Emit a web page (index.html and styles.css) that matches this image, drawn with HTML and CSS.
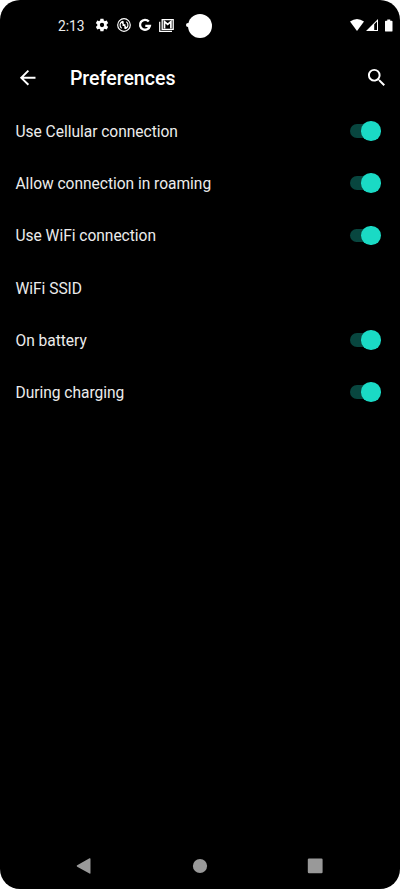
FILE: index.html
```html
<!DOCTYPE html>
<html lang="en">
<head>
<meta charset="utf-8">
<title>Preferences</title>
<link rel="stylesheet" href="styles.css">
</head>
<body>
<div class="screen">
  <div class="status">
    <span class="clock">2:13</span>
    <div class="notifications">
      <svg class="glyph" viewBox="1 1 22 22"><path fill-rule="evenodd" d="M19.4 13c.1-.3.1-.7.1-1s0-.7-.1-1l2.1-1.600c.2-.2.3-.5.1-.7l-2-3.500c-.1-.2-.4-.3-.6-.2l-2.500 1c-.5-.4-1.100-.7-1.700-1L14.400 2.400c0-.2-.2-.4-.5-.4h-4c-.3 0-.5.2-.5.4L9.100 5c-.6.300-1.200.600-1.700 1L5 5c-.2-.1-.5 0-.6.200l-2 3.500c-.1.200-.1.500.1.700L4.600 11c-.1.300-.1.700-.1 1s0 .7.100 1l-2.100 1.600c-.2.200-.3.500-.1.700l2 3.500c.1.200.4.300.6.200l2.400-1c.5.400 1.100.7 1.700 1l.3 2.600c0 .2.2.4.500.4h4c.3 0 .5-.2.500-.4l.4-2.600c.6-.3 1.200-.6 1.700-1l2.500 1c.2.100.5 0 .6-.2l2-3.500c.1-.2.100-.5-.1-.7zM12 15.400a3.400 3.400 0 1 1 0-6.800 3.400 3.400 0 0 1 0 6.800z"/></svg>
      <svg class="glyph" viewBox="0 0 24 24"><g class="sync"><circle cx="12" cy="12" r="10.800"/><path d="M10.500 5.500C4 7 4 15 8 17.500M10.500 5.500v8M13.500 18.500c6.500-1.500 6.500-9.500 2.500-12M13.500 18.500v-8M8 7l8 10"/></g></svg>
      <svg class="glyph" viewBox="0 0 24 24"><path class="google" d="M18.500 6.200A8.500 8.500 0 1 0 20.300 13.500H12.500"/></svg>
      <svg class="mail" viewBox="0 0 15 13"><path class="mail-back" d="M.7 2.800v9.500H13"/><path class="mail-frame" d="M3.200.7h11v9.600h-11z"/><path class="mail-m" d="M5.500 9.500V2.500L8.700 5.300l3.200-2.800v7"/></svg>
    </div>
    <div class="camera"></div>
    <div class="system">
      <svg class="wifi" viewBox="0 0 14 12"><path d="M0 2.600Q7-2.400 14 2.600L7 12z"/></svg>
      <svg class="signal" viewBox="0 0 12 12"><path fill-rule="evenodd" d="M0 12L12 0v12zM8.200 5.300V11H11V2.600z"/></svg>
      <svg class="battery" viewBox="0 0 8 13"><path d="M2.400 0h3.200v1.300h1.500q.9 0 .9.800v10q0 .9-.9.900H.9q-.9 0-.9-.9v-10q0-.8.9-.8h1.500z"/></svg>
    </div>
  </div>
  <header class="toolbar">
    <svg class="icon" viewBox="0 0 24 24"><path d="M20 11H7.830l5.590-5.590L12 4l-8 8 8 8 1.410-1.410L7.830 13H20z"/></svg>
    <h1 class="title">Preferences</h1>
    <svg class="icon" viewBox="0 0 24 24"><path d="M15.500 14h-.79l-.28-.27A6.470 6.470 0 0 0 16 9.500 6.500 6.500 0 1 0 9.500 16c1.610 0 3.090-.59 4.230-1.570l.27.28v.79l5 4.990L20.490 19zm-6 0C7.010 14 5 11.990 5 9.500S7.010 5 9.500 5 14 7.010 14 9.500 11.990 14 9.500 14z"/></svg>
  </header>
  <main class="list">
    <div class="row"><span class="label">Use Cellular connection</span><span class="switch"></span></div>
    <div class="row"><span class="label">Allow connection in roaming</span><span class="switch"></span></div>
    <div class="row"><span class="label">Use WiFi connection</span><span class="switch"></span></div>
    <div class="row"><span class="label">WiFi SSID</span></div>
    <div class="row"><span class="label">On battery</span><span class="switch"></span></div>
    <div class="row"><span class="label">During charging</span><span class="switch"></span></div>
  </main>
  <nav class="navbar">
    <svg viewBox="0 0 16 16"><path d="M1.200 7.300L13.500.3q1-.4 1 .6v14.200q0 1-1 .5L1.200 8.700q-1-.7 0-1.400z"/></svg>
    <svg viewBox="0 0 16 16"><circle cx="8" cy="8" r="7.100"/></svg>
    <svg viewBox="0 0 16 16"><rect x=".8" y=".5" width="14.800" height="14.800" rx="1.200"/></svg>
  </nav>
</div>
</body>
</html>
```
FILE: styles.css
```css
* { box-sizing: border-box; }
body { margin: 0; background: #fff; font-family: Roboto, "Liberation Sans", sans-serif; }
svg { display: block; flex: none; fill: #fff; }
.screen {
  width: 400px;
  height: 889px;
  background: #000;
  border-radius: 20px;
  overflow: hidden;
  display: flex;
  flex-direction: column;
  color: #ececec;
}
.status {
  position: relative;
  height: 50px;
  padding: 0 7.500px 0 58px;
  display: flex;
  align-items: center;
}
.clock { font-size: 13.800px; line-height: 16px; width: 37px; padding-top: 1px; }
.notifications { display: flex; align-items: center; gap: 7.500px; }
.glyph { width: 14px; height: 14px; }
.mail { width: 15px; height: 13px; margin-left: -.5px; }
.mail path { fill: none; stroke: #fff; }
.mail-back { stroke-width: 1.200; }
.mail-frame { stroke-width: 1.300; }
.mail-m { stroke-width: 1.700; }
.sync { fill: none; stroke: #fff; stroke-width: 2; }
.google { fill: none; stroke: #fff; stroke-width: 4; }
.camera {
  position: absolute;
  left: 188px;
  top: 14px;
  width: 24px;
  height: 24px;
  border-radius: 50%;
  background: #fff;
}
.camera::before {
  content: "";
  position: absolute;
  left: -2px;
  top: 9px;
  width: 4px;
  height: 4px;
  border-radius: 50%;
  background: #fff;
}
.system { margin-left: auto; display: flex; align-items: center; }
.wifi { width: 14px; height: 12px; }
.signal { width: 12px; height: 12px; margin: 0 7px 0 2px; }
.battery { width: 7.500px; height: 13px; }
.toolbar { height: 55px; padding: 0 12px 0 15.500px; display: flex; align-items: center; }
.icon { width: 23.400px; height: 23.400px; }
.title {
  flex: 1;
  margin: 0 0 0 31px;
  padding-top: 2px;
  font-size: 19.550px;
  line-height: 24px;
  font-weight: 500;
  color: #fff;
}
.row {
  height: 52.200px;
  padding: 0 19px 0 15.500px;
  display: flex;
  align-items: center;
  justify-content: space-between;
  font-size: 15.570px;
  letter-spacing: -.03px;
  line-height: 20px;
}
.label { padding-top: 2px; }
.switch {
  position: relative;
  width: 27.500px;
  height: 13.600px;
  margin-right: 3.500px;
  border-radius: 7px;
  background: #08463f;
}
.switch::after {
  content: "";
  position: absolute;
  right: -3.500px;
  top: -3px;
  width: 19.600px;
  height: 19.600px;
  border-radius: 50%;
  background: #1adac5;
}
.navbar {
  margin-top: auto;
  height: 47px;
  padding: 0 77px 0 76px;
  display: flex;
  align-items: center;
  justify-content: space-between;
}
.navbar svg { width: 16px; height: 16px; fill: #999; }
```
